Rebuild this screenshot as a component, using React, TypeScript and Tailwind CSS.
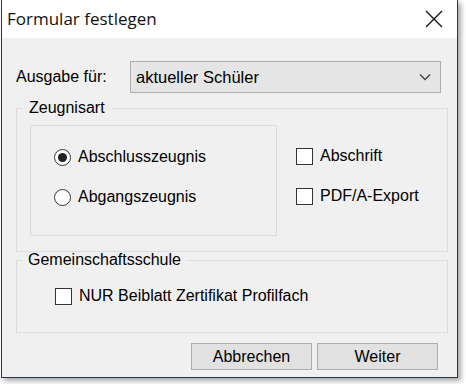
function Radio({ checked, label }: { checked?: boolean; label: string }) {
  return (
    <label className="flex h-[20px] items-center gap-[7px]">
      <span className="flex h-[17px] w-[17px] shrink-0 items-center justify-center rounded-full border border-[#333] bg-white">
        {checked && <span className="h-[9px] w-[9px] rounded-full bg-[#222]" />}
      </span>
      <span>{label}</span>
    </label>
  );
}

function Check({ label }: { label: string }) {
  return (
    <label className="flex h-[20px] items-center gap-[7px]">
      <span className="h-[17px] w-[17px] shrink-0 border border-[#333] bg-white" />
      <span>{label}</span>
    </label>
  );
}

export default function App() {
  return (
    <div className="h-[384px] w-[466px] bg-white font-['Liberation_Sans',Arial,sans-serif] text-[16px] leading-[18px] text-black">
      <div className="ml-[1px] flex h-[378px] w-[457px] flex-col border-x border-b border-[#2c3845] bg-[#f0f0f0] shadow-[3px_3px_5px_rgba(0,0,0,0.35)]">
        {/* title bar */}
        <div className="flex h-[38px] items-center justify-between bg-white pl-[5px] pr-[14px]">
          <span className="font-['Open_Sans',sans-serif] text-[17px] text-[#111]">Formular festlegen</span>
          <svg width="18" height="18" viewBox="0 0 18 18" className="text-[#111]">
            <path d="M1 1L17 17M17 1L1 17" stroke="currentColor" strokeWidth="1.3" />
          </svg>
        </div>

        <div className="flex flex-1 flex-col pl-[14px] pr-[9px] pt-[23px]">
          <div className="flex items-center">
            <span className="w-[114px]">Ausgabe für:</span>
            <div className="flex h-[32px] w-[311px] items-center justify-between border border-[#adadad] bg-[#e5e5e5] pl-[5px] pr-[9px]">
              <span className="text-[16.5px]">aktueller Schüler</span>
              <svg width="12" height="8" viewBox="0 0 12 8">
                <path d="M1 1.5L6 6.5L11 1.5" fill="none" stroke="#444" strokeWidth="1.3" />
              </svg>
            </div>
          </div>

          <fieldset className="mt-[6px] border border-[#dcdcdc]">
            <legend className="ml-[5px] px-[7px]">Zeugnisart</legend>
            <div className="flex pb-[15px] pl-[13px] pt-[8px]">
              <div className="flex h-[111px] w-[247px] flex-col gap-[20px] border border-[#dcdcdc] pl-[23px] pt-[21px]">
                <Radio checked label="Abschlusszeugnis" />
                <Radio label="Abgangszeugnis" />
              </div>
              <div className="flex flex-col gap-[20px] pl-[19px] pt-[21px]">
                <Check label="Abschrift" />
                <Check label="PDF/A-Export" />
              </div>
            </div>
          </fieldset>

          <fieldset className="mt-[-1px] border border-[#dcdcdc]">
            <legend className="ml-[5px] px-[6px]">Gemeinschaftsschule</legend>
            <div className="pb-[26px] pl-[38px] pt-[17px]">
              <Check label="NUR Beiblatt Zertifikat Profilfach" />
            </div>
          </fieldset>

          <div className="mr-[10px] mt-[10px] flex justify-end gap-[5px]">
            <button className="h-[27px] w-[121px] border border-[#adadad] bg-[#e1e1e1]">Abbrechen</button>
            <button className="h-[27px] w-[121px] border border-[#adadad] bg-[#e1e1e1]">Weiter</button>
          </div>
        </div>
      </div>
    </div>
  );
}
